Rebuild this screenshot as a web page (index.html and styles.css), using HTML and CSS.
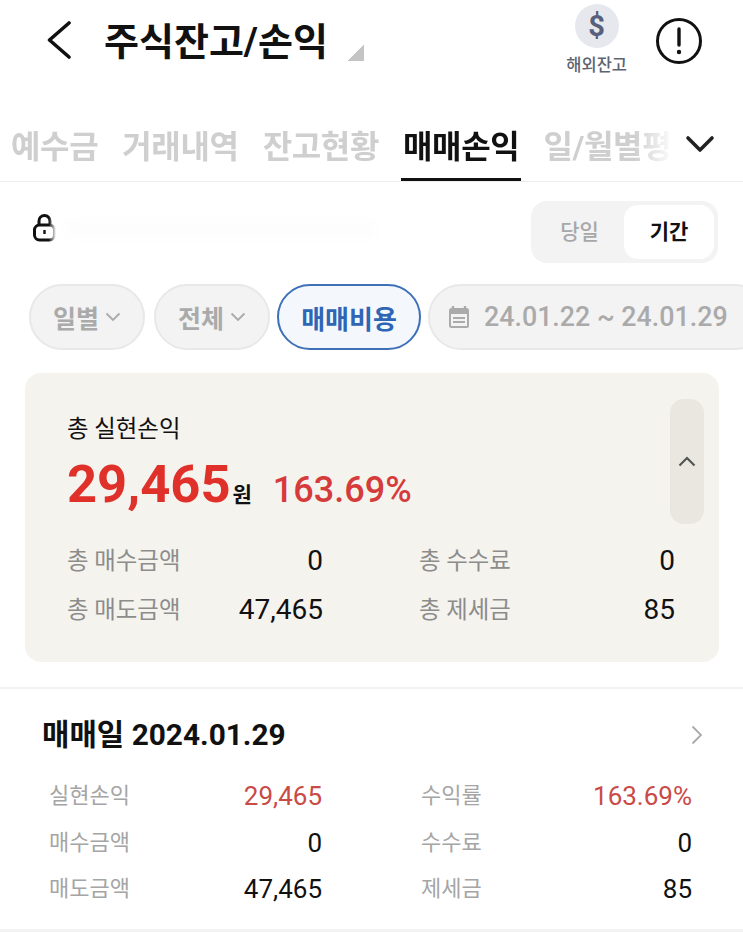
FILE: index.html
```html
<!DOCTYPE html>
<html lang="ko">

<head>
    <meta charset="UTF-8">
    <meta name="viewport" content="width=device-width, initial-scale=1.0">
    <title>주식잔고/손익</title>
    <link rel="stylesheet" href="styles.css">
</head>

<body>
    <header class="top-bar">
        <svg class="back-icon" width="26" height="38" viewBox="0 0 26 38">
            <path d="M23 2 L3.5 19 L23 36" fill="none" stroke="#111" stroke-width="3.6" stroke-linecap="round" stroke-linejoin="round" />
        </svg>
        <h1 class="page-title">주식잔고/손익</h1>
        <span class="title-corner"></span>
        <div class="overseas">
            <span class="overseas-icon">$</span>
            <span class="overseas-label">해외잔고</span>
        </div>
        <svg class="info-icon" width="48" height="48" viewBox="0 0 48 48">
            <circle cx="24" cy="24" r="21.5" fill="none" stroke="#111" stroke-width="3" />
            <path d="M24 12 V28" stroke="#111" stroke-width="3.4" stroke-linecap="round" />
            <circle cx="24" cy="35" r="2.2" fill="#111" />
        </svg>
    </header>

    <nav class="tabs">
        <div class="tab-list">
            <span class="tab">예수금</span>
            <span class="tab">거래내역</span>
            <span class="tab">잔고현황</span>
            <span class="tab active">매매손익</span>
            <span class="tab">일/월별평</span>
        </div>
        <div class="tab-more">
            <svg width="30" height="18" viewBox="0 0 30 18">
                <path d="M3 3 L15 15 L27 3" fill="none" stroke="#222" stroke-width="3.6" stroke-linecap="round" stroke-linejoin="round" />
            </svg>
        </div>
    </nav>

    <div class="account-row">
        <svg class="lock-icon" width="24" height="30" viewBox="0 0 24 30">
            <path d="M7 12 V8 A5.5 5.5 0 0 1 18 8 V12" fill="none" stroke="#111" stroke-width="3" />
            <rect x="2.5" y="12" width="20" height="15" rx="5" fill="none" stroke="#111" stroke-width="3" />
            <path d="M12.5 17 V21" stroke="#111" stroke-width="2.4" />
        </svg>
        <div class="account-blur"></div>
        <div class="segment">
            <span class="segment-item">당일</span>
            <span class="segment-item selected">기간</span>
        </div>
    </div>

    <div class="filters">
        <span class="chip chip-drop">일별
            <svg width="16" height="10" viewBox="0 0 16 10"><path d="M1.5 1.5 L8 8 L14.5 1.5" fill="none" stroke="#aaa" stroke-width="1.8" /></svg>
        </span>
        <span class="chip chip-drop">전체
            <svg width="16" height="10" viewBox="0 0 16 10"><path d="M1.5 1.5 L8 8 L14.5 1.5" fill="none" stroke="#aaa" stroke-width="1.8" /></svg>
        </span>
        <span class="chip chip-cost">매매비용</span>
        <span class="chip chip-date">
            <svg width="22" height="24" viewBox="0 0 22 24">
                <path d="M5 1 V5 M17 1 V5" stroke="#aaa" stroke-width="2.4" />
                <rect x="1" y="3" width="20" height="20" rx="2.5" fill="#aaa" />
                <rect x="3" y="9" width="16" height="12" fill="#f3f3f3" />
                <path d="M5 13 H17 M5 17 H17" stroke="#aaa" stroke-width="1.8" />
            </svg>
            24.01.22 ~ 24.01.29
        </span>
    </div>

    <section class="summary">
        <div class="summary-main">
            <div class="summary-label">총 실현손익</div>
            <div class="summary-value">
                <span class="amount">29,465</span>
                <span class="won">원</span>
                <span class="rate">163.69%</span>
            </div>
        </div>
        <div class="collapse-btn">
            <svg width="18" height="11" viewBox="0 0 18 11">
                <path d="M1.5 9.5 L9 2 L16.5 9.5" fill="none" stroke="#555" stroke-width="2.2" />
            </svg>
        </div>
        <div class="summary-grid">
            <div class="stat"><span class="cell-label">총 매수금액</span><span class="cell-value">0</span></div>
            <div class="stat"><span class="cell-label">총 수수료</span><span class="cell-value">0</span></div>
            <div class="stat"><span class="cell-label">총 매도금액</span><span class="cell-value">47,465</span></div>
            <div class="stat"><span class="cell-label">총 제세금</span><span class="cell-value">85</span></div>
        </div>
    </section>

    <section class="day-block">
        <div class="day-head">
            <h2 class="day-title">매매일 2024.01.29</h2>
            <svg width="12" height="20" viewBox="0 0 12 20">
                <path d="M1.5 1.5 L10 10 L1.5 18.5" fill="none" stroke="#aaa" stroke-width="1.8" />
            </svg>
        </div>
        <div class="day-grid">
            <div class="stat"><span class="day-label">실현손익</span><span class="day-value red">29,465</span></div>
            <div class="stat"><span class="day-label">수익률</span><span class="day-value red">163.69%</span></div>
            <div class="stat"><span class="day-label">매수금액</span><span class="day-value">0</span></div>
            <div class="stat"><span class="day-label">수수료</span><span class="day-value">0</span></div>
            <div class="stat"><span class="day-label">매도금액</span><span class="day-value">47,465</span></div>
            <div class="stat"><span class="day-label">제세금</span><span class="day-value">85</span></div>
        </div>
    </section>
</body>

</html>
```

FILE: styles.css
```css
* {
    box-sizing: border-box;
}

body {
    margin: 0;
    width: 743px;
    height: 933px;
    overflow: hidden;
    background-color: #fff;
    color: #111;
    font-family: "Roboto", "Noto Sans CJK KR", sans-serif;
}

.top-bar {
    display: flex;
    align-items: flex-start;
    height: 125px;
    padding: 21px 40px 0 46px;
}

.back-icon {
    margin-right: 32px;
}

.page-title {
    margin: -6px 0 0;
    font-size: 38px;
    line-height: 54px;
    font-weight: 700;
}

.title-corner {
    width: 16px;
    height: 16px;
    margin: 24px 0 0 20px;
    background: linear-gradient(135deg, transparent 50%, #c4c4c4 50%);
}

.overseas {
    display: flex;
    flex-direction: column;
    align-items: center;
    margin: -17px 0 0 auto;
}

.overseas-icon {
    width: 44px;
    height: 44px;
    border-radius: 50%;
    background-color: #e6e8ee;
    color: #56607d;
    font-size: 29px;
    font-weight: 700;
    line-height: 44px;
    text-align: center;
}

.overseas-label {
    margin-top: 7px;
    font-size: 16.5px;
    line-height: 22px;
    font-weight: 500;
    color: #5d6470;
}

.info-icon {
    margin: -4px 0 0 28px;
}

.tabs {
    display: flex;
    height: 57px;
    border-bottom: 1px solid #ececec;
}

.tab-list {
    display: flex;
    width: 675px;
    padding-left: 11px;
    gap: 24px;
    -webkit-mask-image: linear-gradient(to right, #000 94%, transparent 100%);
    mask-image: linear-gradient(to right, #000 94%, transparent 100%);
}

.tab {
    flex: none;
    height: 56px;
    font-size: 32px;
    line-height: 44px;
    font-weight: 700;
    letter-spacing: -0.35px;
    color: #cfcfcf;
    white-space: nowrap;
}

.tab.active {
    color: #111;
    border-bottom: 4px solid #111;
    height: 57px;
    padding: 0 2px;
    margin: 0 -2px;
}

.tab-more {
    padding: 10px 0 0 10px;
}

.account-row {
    display: flex;
    align-items: center;
    height: 62px;
    margin-top: 19px;
    padding: 0 25px 0 32px;
}

.lock-icon {
    flex: none;
    margin-top: -8px;
    -webkit-mask-image: linear-gradient(to right, #000 70%, transparent 100%);
    mask-image: linear-gradient(to right, #000 70%, transparent 100%);
}

.account-blur {
    width: 310px;
    height: 20px;
    margin: -6px auto 0 10px;
    background-color: #fdfdfd;
    filter: blur(5px);
}

.segment {
    display: flex;
    flex: none;
    width: 187px;
    height: 62px;
    padding: 4px;
    border-radius: 16px;
    background-color: #f3f3f3;
}

.segment-item {
    flex: 1;
    font-size: 21px;
    line-height: 54px;
    font-weight: 500;
    text-align: center;
    color: #a8a8a8;
}

.segment-item.selected {
    flex: none;
    width: 90px;
    border-radius: 14px;
    background-color: #fff;
    color: #111;
    font-weight: 700;
}

.filters {
    display: flex;
    gap: 9px;
    margin-top: 21px;
    padding-left: 29px;
}

.chip {
    flex: none;
    display: flex;
    align-items: center;
    justify-content: center;
    height: 66px;
    border-radius: 33px;
    border: 2px solid #e8e8e8;
    background-color: #f3f3f3;
    color: #aaa;
    font-size: 25px;
    font-weight: 700;
    white-space: nowrap;
}

.chip-drop {
    width: 116px;
    gap: 6px;
}

.chip-cost {
    width: 144px;
    margin: 0 -2px;
    border-color: #3e70b8;
    background-color: #f4f8fd;
    color: #2f65b5;
    font-size: 26px;
}

.chip-date {
    width: 340px;
    justify-content: flex-start;
    gap: 14px;
    padding-left: 18px;
    font-size: 26.8px;
    font-weight: 500;
}

.summary {
    display: grid;
    grid-template-columns: 1fr 34px;
    align-content: start;
    width: 694px;
    height: 289px;
    margin: 23px 0 0 25px;
    padding: 26px 15px 0 42px;
    border-radius: 16px;
    background-color: #f5f3ee;
}

.summary-main {
    padding-top: 13px;
}

.summary-label {
    font-size: 23.4px;
    line-height: 34px;
}

.summary-value {
    display: flex;
    align-items: baseline;
    margin-top: 6px;
}

.amount {
    font-size: 52.5px;
    line-height: 64px;
    font-weight: 700;
    color: #e0302a;
}

.won {
    margin-left: 2px;
    font-size: 21px;
    font-weight: 700;
}

.rate {
    margin-left: 21px;
    font-size: 36px;
    font-weight: 500;
    color: #d53b3b;
}

.collapse-btn {
    display: flex;
    justify-content: center;
    padding-top: 57px;
    height: 125px;
    border-radius: 14px;
    background-color: #e9e7e0;
}

.summary-grid {
    grid-column: 1 / 3;
    display: grid;
    grid-template-columns: 256px 256px;
    column-gap: 96px;
    row-gap: 7px;
    margin-top: 16px;
}

.stat {
    display: flex;
    justify-content: space-between;
    white-space: nowrap;
}

.cell-label {
    font-size: 23.4px;
    line-height: 42px;
    color: #8c8c8c;
}

.cell-value {
    font-size: 28px;
    line-height: 42px;
}

.day-block {
    height: 245px;
    margin-top: 25px;
    padding: 0 40px 0 42px;
    border-top: 2px solid #f2f2f2;
    border-bottom: 3px solid #f2f2f2;
}

.day-head {
    display: flex;
    align-items: center;
    justify-content: space-between;
    padding-top: 28px;
}

.day-title {
    margin: 0;
    font-size: 29.8px;
    line-height: 36px;
    font-weight: 700;
}

.day-grid {
    display: grid;
    grid-template-columns: 273px 271px;
    column-gap: 99px;
    grid-auto-rows: 46.5px;
    margin-top: 20px;
    padding-left: 7px;
}

.day-label {
    font-size: 22px;
    line-height: 46px;
    color: #a5a5a5;
}

.day-value {
    font-size: 26px;
    line-height: 46px;
}

.red {
    color: #c94a47;
}
```
